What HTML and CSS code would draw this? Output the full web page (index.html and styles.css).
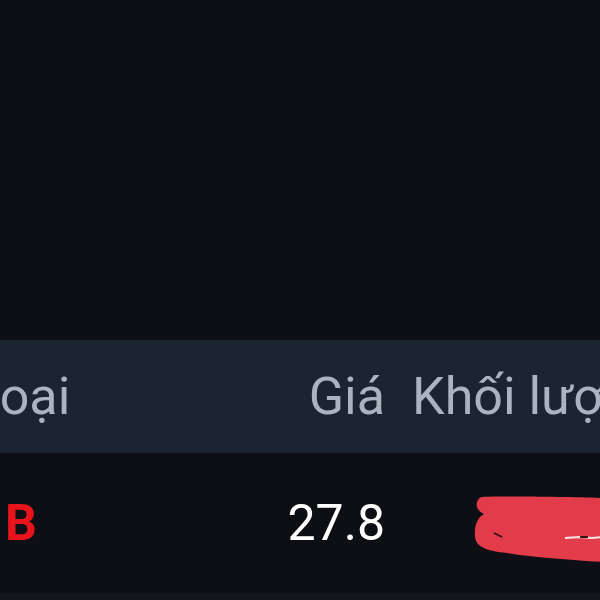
FILE: index.html
```html
<!DOCTYPE html>
<html lang="vi">
<head>
    <meta charset="UTF-8">
    <meta name="viewport" content="width=device-width, initial-scale=1.0">
    <title>Lệnh khớp</title>
    <link rel="stylesheet" href="styles.css">
</head>
<body>

    <div class="chart-area"></div>

    <div class="table">
        <div class="row head">
            <div class="cell type">Loại</div>
            <div class="cell price">Giá</div>
            <div class="cell volume">Khối lượng</div>
        </div>

        <div class="row">
            <div class="cell type sell">B</div>
            <div class="cell price">27.8</div>
            <div class="cell volume">
                <!-- che số khối lượng -->
                <svg class="scribble" width="130" height="70" viewBox="0 0 130 70">
                    <path d="M10 2 C30 1 100 2 130 3 L130 67 C100 65 60 62 35 58 C15 56 4 52 3 42 C2 30 6 22 12 19 C5 16 3 10 6 5 C7 3 9 2 10 2 Z" fill="#e23b4a"/>
                    <path d="M22 38 L30 42" stroke="#2a0d12" stroke-width="1.5"/>
                    <path d="M93 43 L108 42 L120 43 L130 42" stroke="#f4e6e8" stroke-width="2"/>
                    <path d="M108 42 L116 42" stroke="#3a1016" stroke-width="2"/>
                </svg>
            </div>
        </div>

        <div class="row empty"></div>
    </div>

</body>
</html>
```

FILE: styles.css
```css
body {
    margin: 0;
    background: #0d0f14;
    font-family: Roboto, "Noto Sans", sans-serif;
    overflow: hidden;
}

.chart-area {
    height: 340px;
}

.table {
    margin-left: -49px;
    width: 720px;
}

.row {
    display: grid;
    grid-template-columns: 140px 294px 1fr;
    align-items: center;
    height: 140px;
    font-size: 50px;
    line-height: 1;
    color: #ffffff;
}

.row.head {
    height: 113px;
    background: #1b2430;
    color: #aab3bf;
    font-size: 52px;
}

.row.empty {
    background: #12161d;
}

.cell.type {
    text-align: center;
}

.cell.price {
    text-align: right;
}

.cell.volume {
    padding-left: 28px;
    white-space: nowrap;
}

.row.head .volume {
    padding-left: 27px;
}

.sell {
    color: #e8141c;
    font-weight: bold;
}

.scribble {
    display: block;
    margin-left: 59px;
    margin-top: 14px;
}
```
